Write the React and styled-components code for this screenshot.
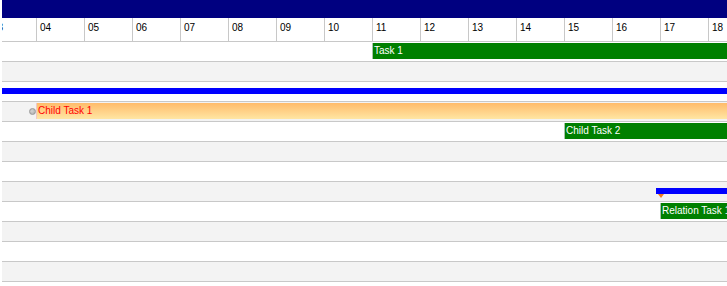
import React from "react";
import styled, { createGlobalStyle, css } from "styled-components";

const GlobalStyle = createGlobalStyle`
  html, body {
    margin: 0;
    padding: 0;
    background: #fff;
  }
  body {
    font-family: "Liberation Sans", Arial, sans-serif;
  }
`;

const DAY_W = 48;
const ORIGIN = 35; // x of day "04" inside the chart

const days = ["03", "04", "05", "06", "07", "08", "09", "10", "11", "12", "13", "14", "15", "16", "17", "18"];

const rows = [
  { bar: { kind: "task", day: 11, label: "Task 1" } },
  {},
  { bar: { kind: "summary", x: -2 } },
  { bar: { kind: "child", day: 4, label: "Child Task 1" }, marker: true },
  { bar: { kind: "task", day: 15, label: "Child Task 2" } },
  {},
  {},
  { bar: { kind: "summary", x: 654 }, arrow: 656 },
  { bar: { kind: "task", day: 17, label: "Relation Task 1" } },
  {},
  {},
  {},
  {},
];

const Chart = styled.div`
  width: 725px;
  height: 286px;
  margin-left: 2px;
  overflow: hidden;
`;

const TopBar = styled.div`
  height: 18px;
  background: #000080;
`;

const Header = styled.div`
  display: flex;
  height: 24px;
  margin-left: -13px;
  border-bottom: 1px solid #c8c8c8;
  box-sizing: border-box;
`;

const DayCell = styled.div`
  flex: 0 0 ${DAY_W}px;
  box-sizing: border-box;
  border-right: 1px solid #c8c8c8;
  padding: 3px 0 0 3px;
  font-size: 10px;
  line-height: 13px;
  color: #000;
`;

const Row = styled.div`
  position: relative;
  height: 20px;
  box-sizing: border-box;
  border-bottom: 1px solid #c8c8c8;
  background: ${(p) => (p.$alt ? "#f3f3f3" : "#fff")};
`;

const barKinds = {
  task: css`
    top: 1px;
    height: 16px;
    right: -4px;
    background: #008000;
    color: #fff;
    box-shadow: -1px 0 0 #a8c4a8;
  `,
  child: css`
    top: 1px;
    height: 16px;
    right: -4px;
    background: linear-gradient(#ffbb6a, #ffe6a4);
    color: #ff0000;
    box-shadow: -1px 0 0 #f0c8c8;
  `,
  summary: css`
    top: 6px;
    height: 6px;
    right: -4px;
    background: #0000ff;
  `,
};

const Bar = styled.div`
  position: absolute;
  box-sizing: border-box;
  padding-left: 1px;
  font-size: 10px;
  line-height: 16px;
  white-space: nowrap;
  ${(p) => barKinds[p.$kind]}
`;

const Marker = styled.div`
  position: absolute;
  left: 27px;
  top: 6px;
  width: 7px;
  height: 7px;
  box-sizing: border-box;
  border-radius: 50%;
  background: radial-gradient(circle at 40% 40%, #d4d4d4, #a8a8a8);
  border: 1px solid #999;
`;

const Arrow = styled.div`
  position: absolute;
  top: 12px;
  width: 0;
  height: 0;
  border-left: 3px solid transparent;
  border-right: 3px solid transparent;
  border-top: 4px solid #f07a20;
`;

export default function App() {
  return (
    <>
      <GlobalStyle />
      <Chart>
        <TopBar />
        <Header>
          {days.map((d) => (
            <DayCell key={d}>{d}</DayCell>
          ))}
        </Header>
        {rows.map((r, i) => {
          const b = r.bar;
          const left = b ? (b.day ? ORIGIN + (b.day - 4) * DAY_W : b.x) : 0;
          return (
            <Row key={i} $alt={i % 2 === 1}>
              {r.marker && <Marker />}
              {b && (
                <Bar $kind={b.kind} style={{ left }}>
                  {b.label}
                </Bar>
              )}
              {r.arrow && <Arrow style={{ left: r.arrow }} />}
            </Row>
          );
        })}
      </Chart>
    </>
  );
}
